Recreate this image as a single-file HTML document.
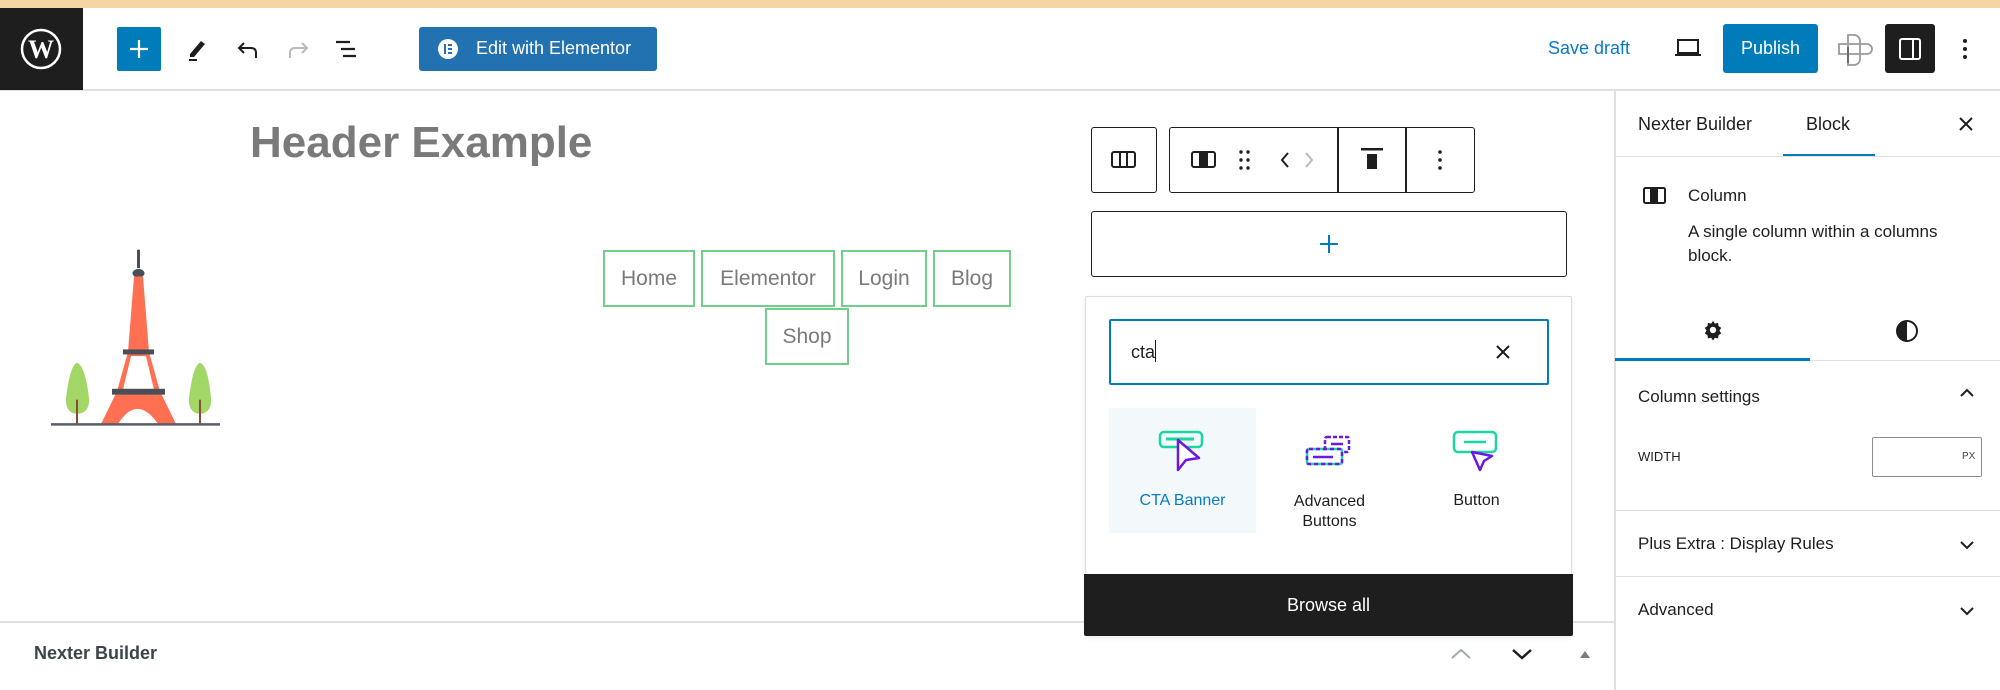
<!DOCTYPE html>
<html><head><meta charset="utf-8"><style>
*{box-sizing:border-box;margin:0;padding:0}
body{width:2000px;height:690px;position:relative;overflow:hidden;background:#fff;font-family:"Liberation Sans",sans-serif;color:#1e1e1e}
.a{position:absolute}
.t{position:absolute;white-space:nowrap}
.nav{position:absolute;border:2px solid #6fcf8a;color:#7a7a7a;font-size:21px;display:flex;align-items:center;justify-content:center}
.tb{position:absolute;border:1.5px solid #1e1e1e;border-radius:3px}
</style></head><body>
<div class="a" style="left:0;top:0;width:2000px;height:8px;background:#f5d4a6"></div>
<div class="a" style="left:0;top:89px;width:2000px;height:2px;background:#e0e0e0"></div>
<div class="a" style="left:0;top:8px;width:83px;height:82px;background:#1e1e1e"></div>
<svg class="a" style="left:20px;top:28px" width="42" height="42" viewBox="0 0 42 42"><circle cx="21" cy="21" r="19" fill="none" stroke="#fff" stroke-width="2.5"/><text x="21" y="30" font-family="Liberation Serif" font-weight="bold" font-size="26" fill="#fff" text-anchor="middle">W</text></svg>
<div class="a" style="left:117px;top:27px;width:44px;height:44px;background:#007cba;border-radius:2px"></div>
<svg class="a" style="left:117px;top:27px" width="44" height="44"><path d="M22 13v18M13 22h18" stroke="#fff" stroke-width="2.2"/></svg>
<svg class="a" style="left:186px;top:37px" width="24" height="24"><path d="M4 17 L15 4 L19 7 L8 20 L4 20Z" fill="#1e1e1e"/><path d="M3 23h8" stroke="#1e1e1e" stroke-width="2"/></svg>
<svg class="a" style="left:235px;top:37px" width="26" height="24"><path d="M9 6 L4 11 L9 16 M4 11 H16 Q21 11 21 16 V21" fill="none" stroke="#1e1e1e" stroke-width="2"/></svg>
<svg class="a" style="left:285px;top:37px" width="26" height="24"><path d="M17 6 L22 11 L17 16 M22 11 H10 Q5 11 5 16 V21" fill="none" stroke="#bbb" stroke-width="2"/></svg>
<svg class="a" style="left:334px;top:37px" width="26" height="24"><path d="M2 5h14M7 12h14M9 19h13" stroke="#1e1e1e" stroke-width="2.2"/></svg>
<div class="a" style="left:419px;top:27px;width:238px;height:44px;background:#2271b1;border-radius:3px"></div>
<svg class="a" style="left:437px;top:38px" width="22" height="22"><circle cx="11" cy="11" r="10" fill="#fff"/><rect x="7" y="6" width="2" height="10" fill="#2271b1"/><rect x="11" y="6" width="4" height="2" fill="#2271b1"/><rect x="11" y="10" width="4" height="2" fill="#2271b1"/><rect x="11" y="14" width="4" height="2" fill="#2271b1"/></svg>
<div class="t" style="left:476px;top:38px;font-size:18px;color:#fff">Edit with Elementor</div>
<div class="t" style="left:1548px;top:38px;font-size:18px;color:#0a7ac4">Save draft</div>
<svg class="a" style="left:1673px;top:36px" width="30" height="24"><rect x="5" y="4" width="20" height="13" fill="none" stroke="#1e1e1e" stroke-width="2"/><path d="M2 19h26" stroke="#1e1e1e" stroke-width="2"/></svg>
<div class="a" style="left:1723px;top:24px;width:95px;height:49px;background:#007cba;border-radius:3px;color:#fff;font-size:18px;display:flex;align-items:center;justify-content:center">Publish</div>
<svg class="a" style="left:1836px;top:31px" width="38" height="36"><path d="M12 4h6a6 6 0 0 1 6 6v18a6 6 0 0 1-6 6h-6ZM3 13h28a5 5 0 0 1 0 10H3Z" fill="none" stroke="#9a9a9a" stroke-width="1.8"/><path d="M12 16v16" stroke="#555" stroke-width="1.5"/></svg>
<div class="a" style="left:1885px;top:24px;width:50px;height:49px;background:#1e1e1e;border-radius:3px"></div>
<svg class="a" style="left:1897px;top:36px" width="26" height="26"><rect x="3" y="3" width="20" height="20" rx="2" fill="none" stroke="#fff" stroke-width="2"/><rect x="15" y="3" width="2" height="20" fill="#fff"/></svg>
<svg class="a" style="left:1960px;top:36px" width="10" height="26"><circle cx="5" cy="5" r="2" fill="#1e1e1e"/><circle cx="5" cy="13" r="2" fill="#1e1e1e"/><circle cx="5" cy="21" r="2" fill="#1e1e1e"/></svg>
<div class="a" style="left:1614px;top:90px;width:1.5px;height:600px;background:#e0e0e0"></div>
<div class="t" style="left:1638px;top:114px;font-size:18px">Nexter Builder</div>
<div class="t" style="left:1806px;top:114px;font-size:18px">Block</div>
<div class="a" style="left:1783px;top:154px;width:92px;height:3px;background:#007cba"></div>
<div class="a" style="left:1615px;top:156px;width:385px;height:1px;background:#e0e0e0"></div>
<svg class="a" style="left:1955px;top:113px" width="22" height="22"><path d="M5 5l12 12M17 5L5 17" stroke="#1e1e1e" stroke-width="2"/></svg>
<svg class="a" style="left:1642px;top:186px" width="26" height="20"><rect x="2" y="2" width="21" height="15" rx="1.5" fill="none" stroke="#1e1e1e" stroke-width="2"/><rect x="8" y="2" width="8" height="15" fill="#1e1e1e"/></svg>
<div class="t" style="left:1688px;top:186px;font-size:17px">Column</div>
<div class="t" style="left:1688px;top:220px;font-size:17px;line-height:24px">A single column within a columns<br>block.</div>
<svg class="a" style="left:1702px;top:319px" width="22" height="22" viewBox="0 0 24 24"><path d="M12 2l2 3 3.5-.8.5 3.5 3 2-2 3 2 3-3 2-.5 3.5-3.5-.8-2 3-2-3-3.5.8L6 17.7l-3-2 2-3-2-3 3-2 .5-3.5 3.5.8z" fill="#1e1e1e"/><circle cx="12" cy="12" r="3.5" fill="#fff"/></svg>
<svg class="a" style="left:1895px;top:319px" width="24" height="24"><circle cx="12" cy="12" r="10" fill="none" stroke="#1e1e1e" stroke-width="2"/><path d="M12 2a10 10 0 0 0 0 20z" fill="#1e1e1e"/></svg>
<div class="a" style="left:1615px;top:360px;width:385px;height:1px;background:#e0e0e0"></div>
<div class="a" style="left:1615px;top:358px;width:195px;height:3px;background:#007cba"></div>
<div class="t" style="left:1638px;top:387px;font-size:17px">Column settings</div>
<svg class="a" style="left:1958px;top:386px" width="18" height="14"><path d="M3 10l6-6 6 6" fill="none" stroke="#1e1e1e" stroke-width="2"/></svg>
<div class="t" style="left:1638px;top:449px;font-size:13px">WIDTH</div>
<div class="a" style="left:1872px;top:437px;width:110px;height:40px;border:1px solid #8c8c8c;border-radius:2px"></div>
<div class="t" style="left:1962px;top:451px;font-size:10px;color:#444">PX</div>
<div class="a" style="left:1615px;top:510px;width:385px;height:1px;background:#e0e0e0"></div>
<div class="t" style="left:1638px;top:534px;font-size:17px">Plus Extra : Display Rules</div>
<svg class="a" style="left:1958px;top:538px" width="18" height="14"><path d="M3 4l6 6 6-6" fill="none" stroke="#1e1e1e" stroke-width="2"/></svg>
<div class="a" style="left:1615px;top:576px;width:385px;height:1px;background:#e0e0e0"></div>
<div class="t" style="left:1638px;top:600px;font-size:17px">Advanced</div>
<svg class="a" style="left:1958px;top:604px" width="18" height="14"><path d="M3 4l6 6 6-6" fill="none" stroke="#1e1e1e" stroke-width="2"/></svg>
<div class="t" style="left:250px;top:118px;font-size:44px;font-weight:bold;color:#7a7a7a">Header Example</div>
<svg class="a" style="left:0;top:243px" width="230" height="186" viewBox="0 0 230 222" preserveAspectRatio="none">
<path d="M77 143 Q85 146 89 185 Q90 203 77 204 Q65 203 66 185 Q70 146 77 143Z" fill="#a2d667"/>
<path d="M200 143 Q208 146 211 185 Q212 203 200 204 Q188 203 189 185 Q193 146 200 143Z" fill="#a2d667"/>
<rect x="76" y="187" width="2" height="29" fill="#8a4a3a"/>
<rect x="199" y="187" width="2" height="29" fill="#8a4a3a"/>
<rect x="137" y="8" width="3" height="22" fill="#4a4f57"/>
<ellipse cx="138.5" cy="36" rx="6" ry="5" fill="#4a4f57"/>
<path d="M134 40h9 L149 130 L160 177 L176 216 H158 Q137 180 118 216 H101 L117 177 L128 130Z" fill="#ff7052"/>
<path d="M131 135 h15 l8 40 h-31z" fill="#fff"/>
<rect x="123" y="127" width="31" height="6" fill="#4a4f57"/>
<rect x="112" y="174" width="53" height="7" fill="#4a4f57"/>
<rect x="51" y="215" width="169" height="3" fill="#5a5f67"/>
</svg>
<div class="nav" style="left:603px;top:250px;width:92px;height:57px">Home</div>
<div class="nav" style="left:701px;top:250px;width:134px;height:57px">Elementor</div>
<div class="nav" style="left:841px;top:250px;width:86px;height:57px">Login</div>
<div class="nav" style="left:933px;top:250px;width:78px;height:57px">Blog</div>
<div class="nav" style="left:765px;top:308px;width:84px;height:57px">Shop</div>
<div class="tb" style="left:1091px;top:127px;width:66px;height:66px"></div>
<svg class="a" style="left:1111px;top:151px" width="26" height="18"><rect x="1" y="1" width="23" height="15" rx="2" fill="none" stroke="#1e1e1e" stroke-width="2"/><path d="M9 1v15M16 1v15" stroke="#1e1e1e" stroke-width="2"/></svg>
<div class="tb" style="left:1169px;top:127px;width:306px;height:66px"></div>
<div class="a" style="left:1337px;top:127px;width:1.5px;height:66px;background:#1e1e1e"></div>
<div class="a" style="left:1405px;top:127px;width:1.5px;height:66px;background:#1e1e1e"></div>
<svg class="a" style="left:1191px;top:151px" width="26" height="18"><rect x="1" y="1" width="23" height="15" rx="2" fill="none" stroke="#1e1e1e" stroke-width="2"/><rect x="8" y="1" width="9" height="15" fill="#1e1e1e"/></svg>
<svg class="a" style="left:1238px;top:149px" width="14" height="22"><circle cx="3" cy="3" r="1.7" fill="#1e1e1e"/><circle cx="10" cy="3" r="1.7" fill="#1e1e1e"/><circle cx="3" cy="11" r="1.7" fill="#1e1e1e"/><circle cx="10" cy="11" r="1.7" fill="#1e1e1e"/><circle cx="3" cy="19" r="1.7" fill="#1e1e1e"/><circle cx="10" cy="19" r="1.7" fill="#1e1e1e"/></svg>
<svg class="a" style="left:1278px;top:150px" width="38" height="20"><path d="M10 3l-6 7 6 7" fill="none" stroke="#1e1e1e" stroke-width="2"/><path d="M28 3l6 7-6 7" fill="none" stroke="#bbb" stroke-width="2"/></svg>
<svg class="a" style="left:1359px;top:147px" width="26" height="26"><rect x="2" y="1" width="22" height="2.5" fill="#1e1e1e"/><rect x="8" y="7" width="10" height="15" fill="#1e1e1e"/></svg>
<svg class="a" style="left:1436px;top:149px" width="8" height="22"><circle cx="4" cy="3" r="1.8" fill="#1e1e1e"/><circle cx="4" cy="11" r="1.8" fill="#1e1e1e"/><circle cx="4" cy="19" r="1.8" fill="#1e1e1e"/></svg>
<div class="tb" style="left:1091px;top:211px;width:476px;height:66px"></div>
<svg class="a" style="left:1317px;top:232px" width="24" height="24"><path d="M12 3v18M3 12h18" stroke="#007cba" stroke-width="2"/></svg>
<div class="a" style="left:1085px;top:296px;width:487px;height:340px;border:1px solid #ddd;border-radius:2px;box-shadow:0 2px 6px rgba(0,0,0,.08);background:#fff"></div>
<div class="a" style="left:1109px;top:319px;width:440px;height:66px;border:2px solid #007cba;border-radius:2px"></div>
<div class="t" style="left:1131px;top:340px;font-size:18px;color:#1e1e1e">cta<span style="display:inline-block;width:1px;height:22px;background:#1e1e1e;vertical-align:-4px"></span></div>
<svg class="a" style="left:1493px;top:342px" width="20" height="20"><path d="M4 4l12 12M16 4L4 16" stroke="#1e1e1e" stroke-width="2"/></svg>
<div class="a" style="left:1109px;top:408px;width:147px;height:125px;background:#f3f8fb"></div>
<svg class="a" style="left:1158px;top:430px" width="46" height="44"><rect x="2" y="2" width="42" height="15" rx="4" fill="none" stroke="#19d6a3" stroke-width="2.5"/><path d="M8 9h28" stroke="#19d6a3" stroke-width="3"/><path d="M20 10 L20 40 L28 30 L41 28Z" fill="#fff" stroke="#6b18e0" stroke-width="2.5" stroke-linejoin="round"/></svg>
<svg class="a" style="left:1305px;top:435px" width="46" height="36"><rect x="20" y="2" width="24" height="15" rx="2" fill="none" stroke="#6b18e0" stroke-width="2.5" stroke-dasharray="4 2"/><rect x="2" y="14" width="35" height="15" rx="2" fill="#fff" stroke="#19d6a3" stroke-width="2.5"/><rect x="2" y="14" width="35" height="15" rx="2" fill="none" stroke="#6b18e0" stroke-width="2.5" stroke-dasharray="4 3"/><path d="M26 9h12M8 22h20" stroke="#6b18e0" stroke-width="2.5"/></svg>
<svg class="a" style="left:1452px;top:430px" width="46" height="44"><rect x="2" y="2" width="42" height="20" rx="4" fill="none" stroke="#19d6a3" stroke-width="2.5"/><path d="M12 12h22" stroke="#19d6a3" stroke-width="2.5"/><path d="M20 22 L28 40 L32 31 L40 26Z" fill="#fff" stroke="#6b18e0" stroke-width="2.5" stroke-linejoin="round"/></svg>
<div class="t" style="left:1109px;top:492px;width:147px;text-align:center;font-size:16px;color:#0a7ac4">CTA Banner</div>
<div class="t" style="left:1256px;top:492px;width:147px;text-align:center;font-size:16px;line-height:20px">Advanced<br>Buttons</div>
<div class="t" style="left:1403px;top:492px;width:147px;text-align:center;font-size:16px">Button</div>
<div class="a" style="left:1084px;top:574px;width:489px;height:62px;background:#1e1e1e;border-radius:0 0 2px 2px;color:#fff;font-size:18px;display:flex;align-items:center;justify-content:center">Browse all</div>
<div class="a" style="left:0;top:621px;width:1084px;height:1.5px;background:#e0e0e0"></div>
<div class="a" style="left:1573px;top:621px;width:41px;height:1.5px;background:#e0e0e0"></div>
<div class="t" style="left:34px;top:643px;font-size:18px;font-weight:bold;color:#3c434a">Nexter Builder</div>
<svg class="a" style="left:1449px;top:646px" width="24" height="16"><path d="M3 12l9-8 9 8" fill="none" stroke="#a7aaad" stroke-width="2"/></svg>
<svg class="a" style="left:1510px;top:646px" width="24" height="16"><path d="M3 4l9 8 9-8" fill="none" stroke="#1e1e1e" stroke-width="2.5"/></svg>
<svg class="a" style="left:1578px;top:648px" width="14" height="12"><path d="M2 10L7 3l5 7z" fill="#787c82"/></svg>
</body></html>
